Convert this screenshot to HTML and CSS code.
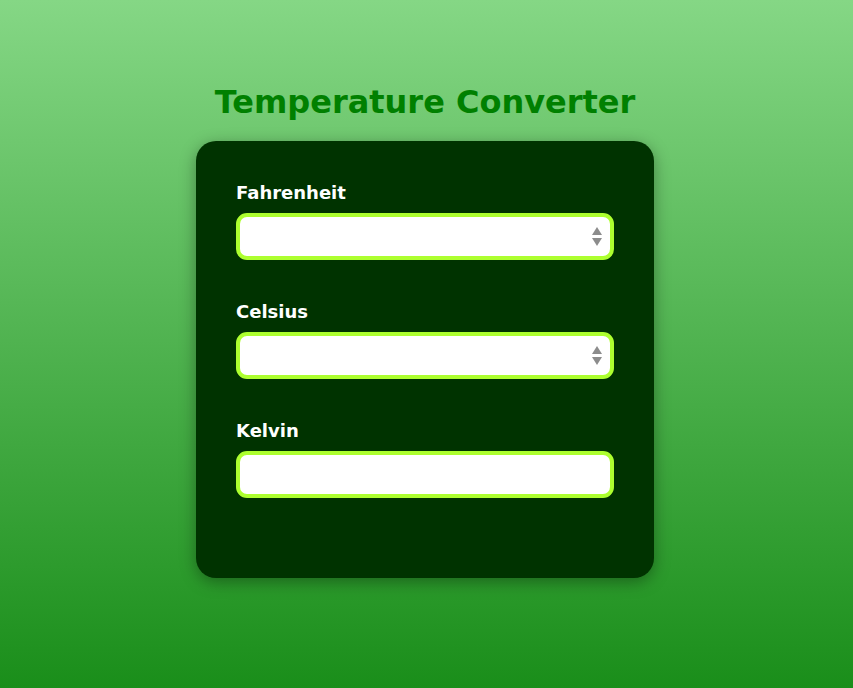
FILE: index.html
```html
<!DOCTYPE html>
<html lang="en">
<head>
<meta charset="utf-8">
<title>Temperature Converter</title>
<link rel="stylesheet" href="styles.css">
</head>
<body>
<main class="page">
  <h1 class="title">Temperature Converter</h1>
  <section class="card">
    <div class="field">
      <label class="label" for="f">Fahrenheit</label>
      <div class="input-wrap">
        <input class="input" id="f" type="number">
        <span class="spin">
          <svg width="10" height="19" viewBox="0 0 10 19"><path d="M5 0 L10 8 L0 8 Z M0 11 L10 11 L5 19 Z" fill="#8c8c8c"/></svg>
        </span>
      </div>
    </div>
    <div class="field">
      <label class="label" for="c">Celsius</label>
      <div class="input-wrap">
        <input class="input" id="c" type="number">
        <span class="spin">
          <svg width="10" height="19" viewBox="0 0 10 19"><path d="M5 0 L10 8 L0 8 Z M0 11 L10 11 L5 19 Z" fill="#8c8c8c"/></svg>
        </span>
      </div>
    </div>
    <div class="field">
      <label class="label" for="k">Kelvin</label>
      <div class="input-wrap">
        <input class="input" id="k" type="text">
      </div>
    </div>
  </section>
</main>
</body>
</html>
```
FILE: styles.css
```css
html, body {
  margin: 0;
  padding: 0;
  height: 100%;
}
body {
  background: linear-gradient(to bottom, #85d785 0%, #1a8e1a 100%);
  font-family: "DejaVu Sans", Verdana, sans-serif;
}
.page {
  display: flex;
  flex-direction: column;
  align-items: center;
  padding-top: 84px;
  padding-right: 3px;
}
.title {
  margin: 0 0 20px;
  font-size: 32px;
  font-weight: bold;
  color: #008000;
  line-height: 37px;
}
.card {
  box-sizing: border-box;
  width: 458px;
  background: #003300;
  border-radius: 20px;
  padding: 40px;
  display: flex;
  flex-direction: column;
  box-shadow: 0 4px 16px rgba(0, 0, 0, 0.35);
}
.field {
  display: flex;
  flex-direction: column;
  margin-bottom: 40px;
}
.label {
  color: #ffffff;
  font-size: 18px;
  font-weight: bold;
  line-height: 23px;
  margin-bottom: 9px;
}
.input-wrap {
  position: relative;
}
.input {
  box-sizing: border-box;
  width: 100%;
  height: 47px;
  border: 4px solid #adff2f;
  border-radius: 11px;
  background: #ffffff;
  outline: none;
  font-family: inherit;
  font-size: 16px;
  padding: 0 10px;
  -moz-appearance: textfield;
}
.input::-webkit-outer-spin-button,
.input::-webkit-inner-spin-button {
  -webkit-appearance: none;
  margin: 0;
}
.spin {
  position: absolute;
  right: 12px;
  top: 14px;
  display: flex;
  pointer-events: none;
}
```
